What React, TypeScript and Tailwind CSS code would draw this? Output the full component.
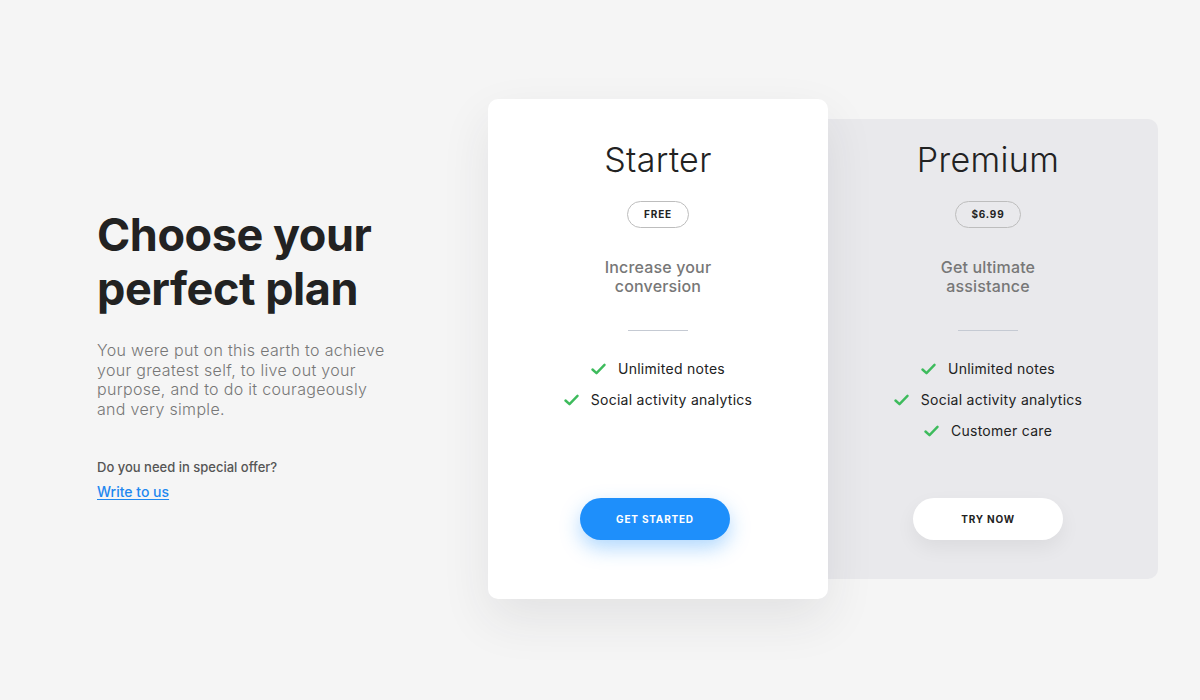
const font = { fontFamily: 'Inter, "Noto Sans", sans-serif' };

function Check() {
  return (
    <svg width="15" height="12" viewBox="0 0 15 12" className="shrink-0">
      <polyline points="1.5,6.5 5.5,10.2 13.5,1.8" fill="none" stroke="#3dbb5c" strokeWidth="2.4" strokeLinecap="round" strokeLinejoin="round" />
    </svg>
  );
}

type Plan = {
  name: string;
  price: string;
  desc: string[];
  features: string[];
  cta: string;
  featured: boolean;
};

const plans: Plan[] = [
  {
    name: 'Starter',
    price: 'FREE',
    desc: ['Increase your', 'conversion'],
    features: ['Unlimited notes', 'Social activity analytics'],
    cta: 'GET STARTED',
    featured: true,
  },
  {
    name: 'Premium',
    price: '$6.99',
    desc: ['Get ultimate', 'assistance'],
    features: ['Unlimited notes', 'Social activity analytics', 'Customer care'],
    cta: 'TRY NOW',
    featured: false,
  },
];

function PlanCard({ plan }: { plan: Plan }) {
  return (
    <div
      className={
        plan.featured
          ? 'relative z-10 w-[340px] h-[500px] bg-white rounded-[10px] shadow-[0_20px_50px_rgba(40,40,60,0.09)] flex flex-col items-center pt-[41px]'
          : 'w-[340px] h-[460px] -ml-[10px] bg-[#e9e9ec] rounded-[10px] flex flex-col items-center pt-[21px]'
      }
    >
      <h2 className="text-[34px] leading-[40px] font-light text-[#222] tracking-[0.01em]">{plan.name}</h2>
      <div className="mt-[21px] h-[27px] px-[16px] rounded-full border border-[#bdbdbd] flex items-center text-[10px] font-bold tracking-[0.08em] text-[#222]">
        {plan.price}
      </div>
      <p className="mt-[30px] text-[16px] leading-[19px] font-medium text-[#777] text-center tracking-[0.01em]">
        {plan.desc[0]}
        <br />
        {plan.desc[1]}
      </p>
      <div className="mt-[34px] w-[60px] h-px bg-[#c5cad3]" />
      <ul className="mt-[28px] flex flex-col items-center gap-[11px] h-[120px]">
        {plan.features.map((f) => (
          <li key={f} className="flex items-center gap-[12px] text-[14px] leading-[20px] text-[#222] tracking-[0.02em]">
            <Check />
            {f}
          </li>
        ))}
      </ul>
      <button
        className={
          plan.featured
            ? 'mt-[19px] mr-[6px] w-[150px] h-[42px] rounded-full bg-[#1e8ffb] text-white text-[10px] font-bold tracking-[0.08em] shadow-[0_8px_20px_rgba(30,143,251,0.35)]'
            : 'mt-[19px] w-[150px] h-[42px] rounded-full bg-white text-[#222] text-[10px] font-bold tracking-[0.08em] shadow-[0_8px_20px_rgba(0,0,0,0.06)]'
        }
      >
        {plan.cta}
      </button>
    </div>
  );
}

export default function App() {
  return (
    <div className="min-h-screen w-full bg-[#f5f5f5] flex items-center pl-[97px]" style={font}>
      <div className="w-[292px] pt-[11px]">
        <h1 className="text-[45px] leading-[54px] font-bold text-[#222] tracking-[-0.01em]">
          Choose your
          <br />
          perfect plan
        </h1>
        <p className="mt-[25px] text-[16px] leading-[19.5px] font-light text-[#777] tracking-[0.02em]">
          You were put on this earth to achieve your greatest self, to live out your purpose, and to do it courageously and
          very simple.
        </p>
        <p className="mt-[39px] text-[13px] leading-[18px] font-medium text-[#555]">Do you need in special offer?</p>
        <a href="#" className="mt-[7px] inline-block text-[14px] leading-[18px] font-medium text-[#1e88f0] underline underline-offset-2">
          Write to us
        </a>
      </div>
      <div className="ml-[99px] -mt-[2px] flex items-center">
        {plans.map((p) => (
          <PlanCard key={p.name} plan={p} />
        ))}
      </div>
    </div>
  );
}
